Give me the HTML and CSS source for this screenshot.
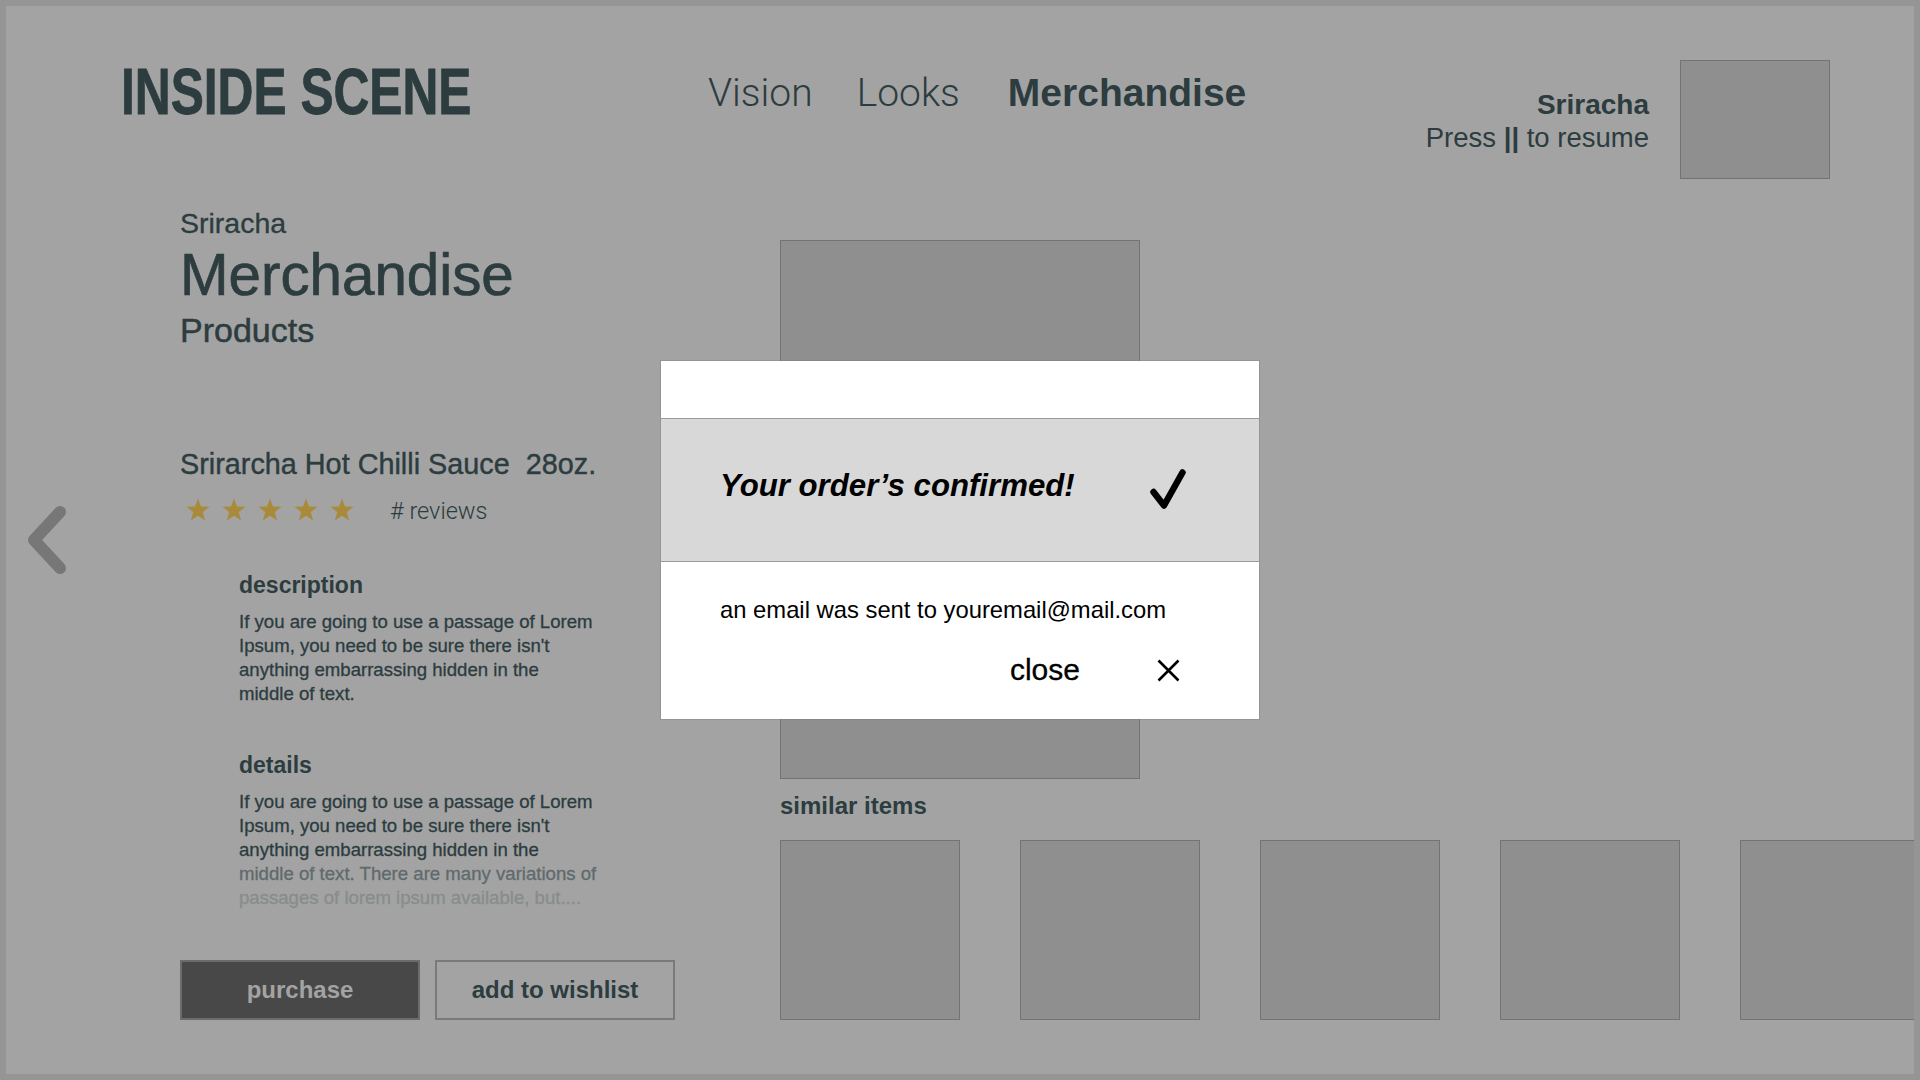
FILE: index.html
```html
<!DOCTYPE html>
<html lang="en">
<head>
<meta charset="utf-8">
<title>Inside Scene – Merchandise</title>
<link rel="stylesheet" href="styles.css">
</head>
<body>
<div class="screen">
  <header class="top">
    <div class="brand"><span class="logo">INSIDE SCENE</span></div>
    <nav class="nav">
      <span class="nav-item light">Vision</span>
      <span class="nav-item light">Looks</span>
      <span class="nav-item active">Merchandise</span>
    </nav>
    <div class="user">
      <div class="user-text">
        <div class="user-name">Sriracha</div>
        <div class="user-hint">Press <b class="pause">||</b> to resume</div>
      </div>
      <div class="user-thumb"></div>
    </div>
  </header>

  <main class="main">
    <section class="info">
      <div class="info-sub">Sriracha</div>
      <h1 class="info-title">Merchandise</h1>
      <div class="info-cat">Products</div>

      <h2 class="product-name">Srirarcha Hot Chilli Sauce&nbsp; 28oz.</h2>
      <div class="rating">
        <div class="stars">
          <svg class="star" viewBox="0 0 24 24"><polygon points="12,0.5 14.9,8.4 23.5,8.8 16.8,14.1 19.1,22.6 12,17.8 4.9,22.6 7.2,14.1 0.5,8.8 9.1,8.4"/></svg>
          <svg class="star" viewBox="0 0 24 24"><polygon points="12,0.5 14.9,8.4 23.5,8.8 16.8,14.1 19.1,22.6 12,17.8 4.9,22.6 7.2,14.1 0.5,8.8 9.1,8.4"/></svg>
          <svg class="star" viewBox="0 0 24 24"><polygon points="12,0.5 14.9,8.4 23.5,8.8 16.8,14.1 19.1,22.6 12,17.8 4.9,22.6 7.2,14.1 0.5,8.8 9.1,8.4"/></svg>
          <svg class="star" viewBox="0 0 24 24"><polygon points="12,0.5 14.9,8.4 23.5,8.8 16.8,14.1 19.1,22.6 12,17.8 4.9,22.6 7.2,14.1 0.5,8.8 9.1,8.4"/></svg>
          <svg class="star" viewBox="0 0 24 24"><polygon points="12,0.5 14.9,8.4 23.5,8.8 16.8,14.1 19.1,22.6 12,17.8 4.9,22.6 7.2,14.1 0.5,8.8 9.1,8.4"/></svg>
        </div>
        <span class="reviews"># reviews</span>
      </div>

      <div class="section">
        <h3 class="section-title">description</h3>
        <p class="para">
          <span class="line">If you are going to use a passage of Lorem</span>
          <span class="line">Ipsum, you need to be sure there isn't</span>
          <span class="line">anything embarrassing hidden in the</span>
          <span class="line">middle of text.</span>
        </p>
        <h3 class="section-title details">details</h3>
        <p class="para">
          <span class="line">If you are going to use a passage of Lorem</span>
          <span class="line">Ipsum, you need to be sure there isn't</span>
          <span class="line">anything embarrassing hidden in the</span>
          <span class="line fade1">middle of text. There are many variations of</span>
          <span class="line fade2">passages of lorem ipsum available, but....</span>
        </p>
      </div>

      <div class="actions">
        <button class="btn btn-primary">purchase</button>
        <button class="btn btn-outline">add to wishlist</button>
      </div>
    </section>

    <section class="media">
      <div class="hero-img"></div>
      <h3 class="similar-title">similar items</h3>
      <div class="similar-row">
        <div class="thumb"></div>
        <div class="thumb"></div>
        <div class="thumb"></div>
        <div class="thumb"></div>
        <div class="thumb"></div>
      </div>
    </section>
  </main>

  <svg class="prev" viewBox="0 0 44 74" width="44" height="74"><polyline points="36,9 10,37 36,65"/></svg>

  <div class="modal">
    <div class="modal-top"></div>
    <div class="modal-band">
      <span class="modal-title">Your order’s confirmed!</span>
      <svg class="check" viewBox="0 0 40 44" width="40" height="44"><polyline points="5.5,25 16,38.5 34.5,5.5"/></svg>
    </div>
    <div class="modal-bottom">
      <div class="modal-msg">an email was sent to youremail@mail.com</div>
      <div class="modal-close">
        <span class="close-label">close</span>
        <svg class="close-x" viewBox="0 0 23 23" width="23" height="23"><path d="M1.5 1.5 L21.5 21.5 M21.5 1.5 L1.5 21.5"/></svg>
      </div>
    </div>
  </div>
</div>
</body>
</html>
```

FILE: styles.css
```css
* { box-sizing: border-box; }

html, body {
  margin: 0;
  padding: 0;
}

body {
  background: #959595;
  font-family: "Liberation Sans", Arial, sans-serif;
  color: #2c3c3f;
}

.screen {
  position: relative;
  margin: 6px;
  height: 1068px;
  background: #a3a3a3;
  overflow: hidden;
}

/* ---------- header ---------- */
.top {
  display: flex;
  align-items: flex-start;
  padding: 54px 84px 0 115px;
  height: 173px;
}

.brand {
  width: 587px;
  flex-shrink: 0;
}

.logo {
  display: inline-block;
  font-size: 64px;
  line-height: 64px;
  font-weight: 700;
  white-space: nowrap;
  transform: scaleX(0.776);
  transform-origin: left center;
  -webkit-text-stroke: 0.8px currentColor;
}

.nav {
  display: flex;
  align-items: baseline;
  gap: 44px;
  margin-top: 9px;
}

.nav-item {
  line-height: 48px;
  white-space: nowrap;
}

.nav-item.light {
  font-family: Roboto, "Liberation Sans", sans-serif;
  font-weight: 300;
  font-size: 39px;
}

.nav-item.active {
  font-weight: 700;
  font-size: 39px;
  margin-left: 4px;
}

.user {
  margin-left: auto;
  display: flex;
  align-items: flex-start;
}

.user-text {
  margin-top: 28px;
  text-align: right;
  font-size: 28px;
  line-height: 33px;
  white-space: nowrap;
}

.user-hint { font-size: 27.5px; }

.user-name { font-weight: 700; }

.pause { font-weight: 700; }

.user-thumb {
  width: 150px;
  height: 119px;
  margin-left: 31px;
  background: #8f8f8f;
  border: 1px solid #737373;
}

/* ---------- main ---------- */
.main {
  display: flex;
  padding-left: 174px;
}

.info {
  width: 600px;
  flex-shrink: 0;
}

.info-sub {
  font-size: 28.5px;
  line-height: 32px;
  margin-top: 28px;
  -webkit-text-stroke: 0.3px currentColor;
}

.info-title {
  font-size: 58.3px;
  line-height: 64px;
  font-weight: 400;
  margin: 4px 0 0 0;
  -webkit-text-stroke: 0.7px currentColor;
}

.info-cat {
  font-size: 34px;
  line-height: 38px;
  margin-top: 4px;
  -webkit-text-stroke: 0.5px currentColor;
}

.product-name {
  font-size: 28.8px;
  line-height: 34px;
  font-weight: 400;
  margin: 98px 0 0;
  white-space: nowrap;
  -webkit-text-stroke: 0.4px currentColor;
}

.rating {
  display: flex;
  align-items: center;
  height: 24px;
  margin-top: 17px;
  padding-left: 6px;
}

.stars {
  display: flex;
  gap: 12px;
}

.star {
  width: 24px;
  height: 24px;
  fill: #a88a3a;
}

.reviews {
  margin-left: 36px;
  font-family: Roboto, "Liberation Sans", sans-serif;
  font-weight: 300;
  font-size: 23.5px;
  line-height: 24px;
  position: relative;
  top: 1px;
}

.section {
  margin-left: 59px;
}

.section-title {
  font-size: 23px;
  line-height: 28px;
  font-weight: 700;
  margin: 49px 0 0;
}

.section-title.details {
  margin-top: 45px;
}

.para {
  margin: 11px 0 0;
  font-size: 18.6px;
  line-height: 24px;
  -webkit-text-stroke: 0.3px currentColor;
}

.line {
  display: block;
  white-space: nowrap;
}

.line.fade1 { color: #5f6a6c; }
.line.fade2 { color: #878c8c; }

.actions {
  display: flex;
  gap: 15px;
  margin-top: 50px;
}

.btn {
  width: 240px;
  height: 60px;
  font-family: "Liberation Sans", Arial, sans-serif;
  font-size: 24px;
  font-weight: 700;
  padding: 0;
  border: 2px solid #6c6c6c;
  cursor: pointer;
}

.btn-primary {
  background: #484848;
  color: #a3a3a3;
}

.btn-outline {
  background: transparent;
  color: #2c3c3f;
  border-color: #7a7a7a;
}

/* ---------- media column ---------- */
.media {
  flex: 1;
  min-width: 0;
}

.hero-img {
  width: 360px;
  height: 539px;
  margin-top: 61px;
  background: #8f8f8f;
  border: 1px solid #737373;
}

.similar-title {
  font-size: 24px;
  line-height: 28px;
  font-weight: 700;
  margin: 13px 0 0;
}

.similar-row {
  display: flex;
  gap: 60px;
  margin-top: 20px;
}

.thumb {
  flex-shrink: 0;
  width: 180px;
  height: 180px;
  background: #8f8f8f;
  border: 1px solid #737373;
}

/* ---------- overlays ---------- */
.prev {
  position: absolute;
  left: 18px;
  top: 497px;
  fill: none;
  stroke: #777777;
  stroke-width: 12;
  stroke-linecap: round;
  stroke-linejoin: round;
}

.modal {
  position: absolute;
  left: 655px;
  top: 355px;
  width: 598px;
  height: 358px;
  background: #ffffff;
  color: #000;
  box-shadow: 0 0 0 1px rgba(120,120,120,0.35);
}

.modal-top {
  height: 57px;
}

.modal-band {
  height: 144px;
  background: #d8d8d8;
  border-top: 1px solid #9c9c9c;
  border-bottom: 1px solid #9c9c9c;
  display: flex;
  align-items: flex-start;
  justify-content: space-between;
  padding: 48px 71px 0 59px;
}

.modal-title {
  font-size: 31.2px;
  line-height: 36px;
  font-weight: 700;
  font-style: italic;
  margin-top: 1px;
  white-space: nowrap;
}

.check {
  fill: none;
  stroke: #000;
  stroke-width: 6.5;
  stroke-linecap: round;
  stroke-linejoin: round;
}

.modal-bottom {
  padding: 34px 79px 0 59px;
}

.modal-msg {
  font-size: 23.8px;
  line-height: 28px;
  white-space: nowrap;
}

.modal-close {
  display: flex;
  justify-content: flex-end;
  align-items: center;
  margin-top: 29px;
}

.close-label {
  font-size: 30px;
  line-height: 34px;
  -webkit-text-stroke: 0.3px currentColor;
}

.close-x {
  margin-left: 77px;
  fill: none;
  stroke: #000;
  stroke-width: 2.6;
}
```
